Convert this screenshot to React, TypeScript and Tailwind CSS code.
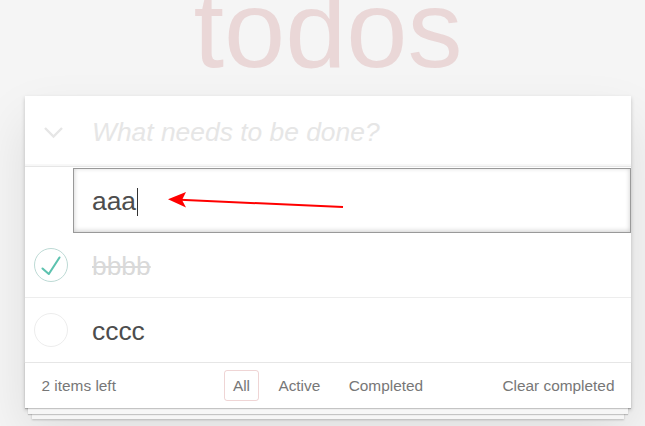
import React from 'react';

type Todo = { id: number; title: string; completed: boolean };

const TODOS: Todo[] = [
  { id: 2, title: 'bbbb', completed: true },
  { id: 3, title: 'cccc', completed: false },
];

function ToggleCircle({ checked }: { checked: boolean }) {
  return (
    <svg width="36" height="36" viewBox="0 0 36 36" className="shrink-0">
      <circle cx="18" cy="18" r="16.5" fill="none" stroke={checked ? '#bddad5' : '#ededed'} strokeWidth="1" />
      {checked && (
        <polyline
          points="9.5,21.5 15.8,27 26.5,10.5"
          fill="none"
          stroke="#5dc2af"
          strokeWidth="2.1"
          strokeLinecap="round"
          strokeLinejoin="round"
        />
      )}
    </svg>
  );
}

export default function App() {
  return (
    <div className="relative flex min-h-[426px] flex-col overflow-hidden bg-[#f5f5f5] font-['Liberation_Sans',Arial,sans-serif] text-[#4d4d4d]">
      <h1 className="-mt-[26px] ml-[25px] w-[606px] text-center text-[110px] font-thin leading-[110px] text-[rgba(175,47,47,0.15)]">
        todos
      </h1>

      <section className="mt-[12px] ml-[25px] w-[606px] bg-white shadow-[0_2px_4px_0_rgba(0,0,0,0.2),0_25px_50px_0_rgba(0,0,0,0.1)]">
        <header className="flex h-[70px] items-center pt-[2px] shadow-[inset_0_-2px_1px_rgba(0,0,0,0.03)]">
          <span className="flex w-[67px] items-center pl-[18px]">
            <svg width="21" height="13" viewBox="0 0 21 13">
              <polyline points="2,2 10.5,10.5 19,2" fill="none" stroke="#e6e6e6" strokeWidth="2.4" />
            </svg>
          </span>
          <input
            className="h-full flex-1 bg-transparent text-[26.4px] text-[#4d4d4d] outline-none placeholder:italic placeholder:text-[#e6e6e6]"
            placeholder="What needs to be done?"
          />
        </header>

        <ul className="border-t border-[#e6e6e6]">
          <li className="h-[66px] pt-px">
            <div className="ml-[48px] flex h-[65px] items-center border border-[#999] pt-[2px] pl-[18px] text-[26.4px] text-[#4d4d4d] shadow-[inset_0_-1px_5px_0_rgba(0,0,0,0.2)]">
              <span>aaa</span>
              <span className="ml-px inline-block h-[28px] w-px bg-[#333]" />
            </div>
          </li>
          {TODOS.map((t, i) => (
            <li
              key={t.id}
              className={`flex items-center ${i < TODOS.length - 1 ? 'h-[65px] border-b border-[#ededed]' : 'h-[64px]'}`}
            >
              <span className="flex w-[67px] items-center pl-[8px]">
                <ToggleCircle checked={t.completed} />
              </span>
              <label
                className={`pt-[3px] text-[26.4px] ${t.completed ? 'text-[#d9d9d9] line-through' : 'text-[#4d4d4d]'}`}
              >
                {t.title}
              </label>
            </li>
          ))}
        </ul>

        <footer className="grid h-[46px] grid-cols-[1fr_auto_1fr] items-center border-t border-[#e6e6e6] px-[16.5px] text-[15.4px] text-[#777] shadow-[0_1px_1px_rgba(0,0,0,0.2),0_9px_0_-3px_#f6f6f6,0_10px_1px_-3px_rgba(0,0,0,0.2),0_18px_0_-7px_#f6f6f6,0_19px_2px_-7px_rgba(0,0,0,0.2)]">
          <span>2 items left</span>
          <ul className="flex items-center gap-[11px]">
            <li className="rounded-[3px] border border-[rgba(175,47,47,0.2)] px-[7.7px] py-[3px]">All</li>
            <li className="rounded-[3px] border border-transparent px-[7.7px] py-[3px]">Active</li>
            <li className="rounded-[3px] border border-transparent px-[7.7px] py-[3px]">Completed</li>
          </ul>
          <span className="text-right">Clear completed</span>
        </footer>
      </section>

      {/* annotation arrow drawn over the screenshot */}
      <svg className="pointer-events-none absolute inset-0" width="645" height="426" viewBox="0 0 645 426">
        <line x1="180" y1="199.8" x2="343" y2="207" stroke="#ff0000" strokeWidth="2" />
        <polygon points="168,199.3 186,192 182,200 186,207.5" fill="#ff0000" />
      </svg>
    </div>
  );
}
